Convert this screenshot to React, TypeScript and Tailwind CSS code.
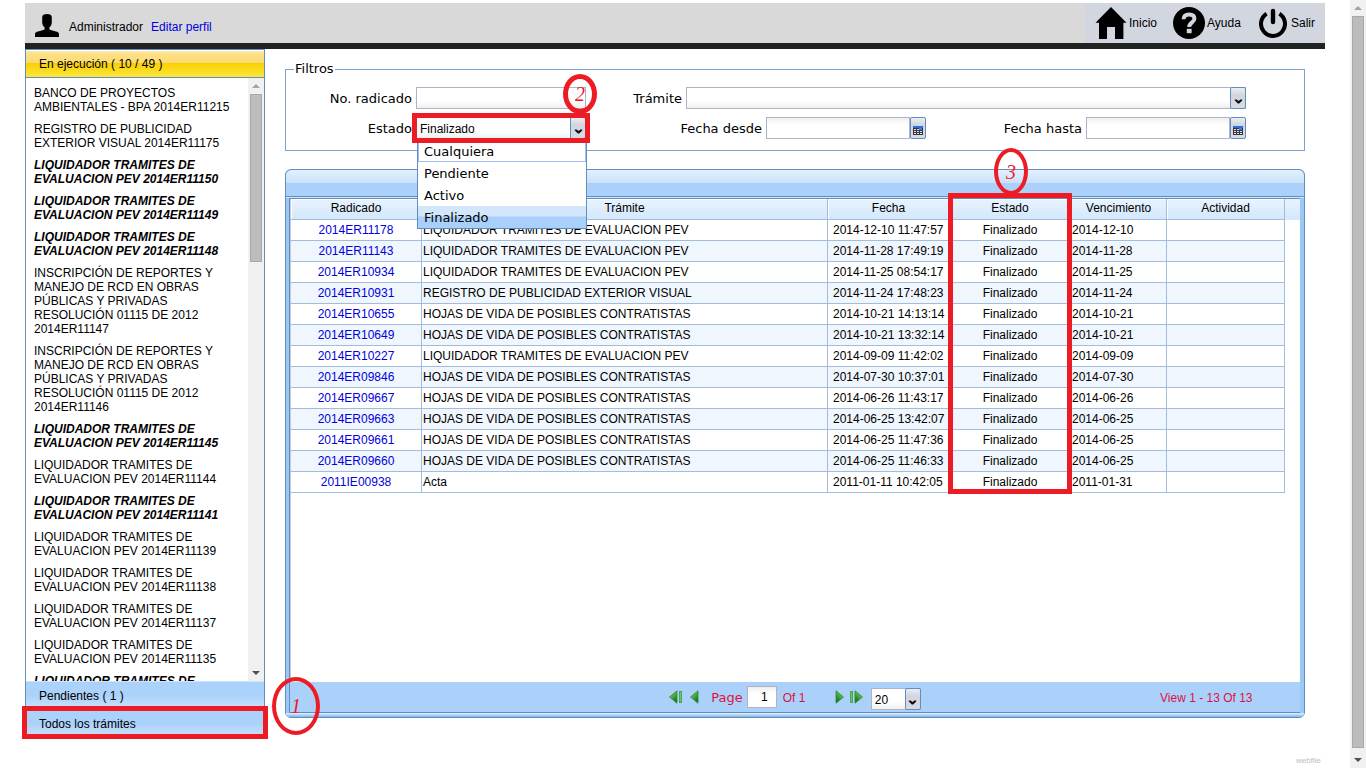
import React, { useState } from "react";

type Task = { lines: string[]; bold?: boolean };

const liq = (code: string, bold = false): Task => ({
  lines: ["LIQUIDADOR TRAMITES DE", `EVALUACION PEV ${code}`],
  bold,
});

const rcd = (code: string): Task => ({
  lines: [
    "INSCRIPCIÓN DE REPORTES Y",
    "MANEJO DE RCD EN OBRAS",
    "PÚBLICAS Y PRIVADAS",
    "RESOLUCIÓN 01115 DE 2012",
    code,
  ],
});

const tasks: Task[] = [
  { lines: ["BANCO DE PROYECTOS", "AMBIENTALES - BPA 2014ER11215"] },
  { lines: ["REGISTRO DE PUBLICIDAD", "EXTERIOR VISUAL 2014ER11175"] },
  liq("2014ER11150", true),
  liq("2014ER11149", true),
  liq("2014ER11148", true),
  rcd("2014ER11147"),
  rcd("2014ER11146"),
  liq("2014ER11145", true),
  liq("2014ER11144"),
  liq("2014ER11141", true),
  liq("2014ER11139"),
  liq("2014ER11138"),
  liq("2014ER11137"),
  liq("2014ER11135"),
  { lines: ["LIQUIDADOR TRAMITES DE"], bold: true },
];

const LIQ = "LIQUIDADOR TRAMITES DE EVALUACION PEV";
const HOJAS = "HOJAS DE VIDA DE POSIBLES CONTRATISTAS";

const rows: string[][] = [
  ["2014ER11178", LIQ, "2014-12-10 11:47:57", "2014-12-10"],
  ["2014ER11143", LIQ, "2014-11-28 17:49:19", "2014-11-28"],
  ["2014ER10934", LIQ, "2014-11-25 08:54:17", "2014-11-25"],
  ["2014ER10931", "REGISTRO DE PUBLICIDAD EXTERIOR VISUAL", "2014-11-24 17:48:23", "2014-11-24"],
  ["2014ER10655", HOJAS, "2014-10-21 14:13:14", "2014-10-21"],
  ["2014ER10649", HOJAS, "2014-10-21 13:32:14", "2014-10-21"],
  ["2014ER10227", LIQ, "2014-09-09 11:42:02", "2014-09-09"],
  ["2014ER09846", HOJAS, "2014-07-30 10:37:01", "2014-07-30"],
  ["2014ER09667", HOJAS, "2014-06-26 11:43:17", "2014-06-26"],
  ["2014ER09663", HOJAS, "2014-06-25 13:42:07", "2014-06-25"],
  ["2014ER09661", HOJAS, "2014-06-25 11:47:36", "2014-06-25"],
  ["2014ER09660", HOJAS, "2014-06-25 11:46:33", "2014-06-25"],
  ["2011IE00938", "Acta", "2011-01-11 10:42:05", "2011-01-31"],
];

const inputCls =
  "block h-[22px] w-full min-w-0 flex-1 appearance-none border border-[#b0b2c6] bg-linear-to-b from-[#eef0f0] via-white via-35% to-white px-1 text-xs outline-none";
const comboCls =
  "block w-full min-w-0 flex-1 appearance-none border border-[#b0b2c6] bg-linear-to-b from-white via-white via-65% to-[#eef0f0] outline-none";
const sideBtnCls =
  "h-7 w-full border-t border-[#cfe4fb] bg-linear-to-b from-[#abd2fb] via-[#abd2fb] via-50% to-[#cae1fc] pl-[13px] text-left text-black";
const thCls =
  "h-[21px] border-r border-b border-[#a3bcdb] bg-linear-to-b from-[#e9f3fe] to-[#d3e7fc] p-0 pb-0.5 text-center font-normal shadow-[inset_1px_1px_0_#fff]";
const tdCls = "h-[21px] overflow-hidden border-r border-b border-[#a3bcdb] p-0 whitespace-nowrap";

function Chevron() {
  return (
    <svg width="9" height="5" viewBox="0 0 9 5" aria-hidden="true">
      <path d="M0.8 0.4H2.6L4.5 2 6.4 0.4H8.2V1.6L5.2 4.4H3.8L0.8 1.6Z" fill="#111" />
    </svg>
  );
}

function Calendar() {
  return (
    <svg width="10" height="9" viewBox="0 0 10 9" shapeRendering="crispEdges" aria-hidden="true">
      <rect width="10" height="9" fill="#33343c" />
      <rect width="10" height="2" fill="#2d6fd0" />
      <path d="M1 3h2v1H1zM4 3h2v1H4zM1 5h2v1H1zM4 5h2v1H4zM7 5h2v1H7zM1 7h2v1H1zM4 7h2v1H4zM7 7h2v1H7z" fill="#e6e8ee" />
      <rect x="6" y="2" width="3" height="2" fill="#2a86f2" />
    </svg>
  );
}

const triggerCls =
  "flex h-[22px] w-4 shrink-0 justify-center rounded-xs border border-[#5f8fc0] bg-linear-to-b from-[#eceef3] via-[#d2d5de] via-35% to-[#d8dbe3]";

function DateField({ id, label }: { id: string; label: string }) {
  return (
    <div className="flex min-w-0 flex-1">
      <input id={id} className={inputCls} />
      <button type="button" aria-label={`Calendario ${label}`} className={`${triggerCls} items-end pb-[3px]`}>
        <Calendar />
      </button>
    </div>
  );
}

function ComboTrigger() {
  return (
    <span className={`pointer-events-none absolute right-0 items-end pb-1 ${triggerCls}`}>
      <Chevron />
    </span>
  );
}

function ScrollArrow({ down = false }: { down?: boolean }) {
  return (
    <svg width="8" height="4" viewBox="0 0 8 4" aria-hidden="true">
      {down ? <path d="M0 0H8L4 4Z" fill="#505050" /> : <path d="M0 4H8L4 0Z" fill="#a3a3a3" />}
    </svg>
  );
}

function Ring({ className, children }: { className: string; children: React.ReactNode }) {
  return (
    <div
      className={`pointer-events-none absolute z-30 flex items-center justify-center rounded-[50%] border-[#ed1c24] font-['Liberation_Serif',serif] text-xl text-[#ed1c24] italic ${className}`}
    >
      {children}
    </div>
  );
}

function PagerArrow({ bar = false, right = false, label }: { bar?: boolean; right?: boolean; label: string }) {
  const width = bar ? 13 : 9;
  return (
    <button type="button" aria-label={label} className={right ? "shrink-0 -scale-x-100" : "shrink-0"}>
      <svg width={width} height="14" viewBox={`0 0 ${width} 14`} aria-hidden="true">
        <defs>
          <linearGradient id="leaf" x1="0" y1="0" x2="0.6" y2="1">
            <stop offset="0" stopColor="#9ade8a" />
            <stop offset="0.5" stopColor="#4db043" />
            <stop offset="1" stopColor="#14701a" />
          </linearGradient>
        </defs>
        <path d="M8 0.8V13.2L0.5 7Z" fill="url(#leaf)" stroke="#2f8a35" strokeWidth="0.8" />
        {bar && <rect x="10.4" y="1.4" width="2" height="11.2" fill="#6cc65a" stroke="#3d9c40" strokeWidth="0.8" />}
      </svg>
    </button>
  );
}

function Header() {
  return (
    <header className="mt-[3px] flex h-[46px] shrink-0 items-stretch border-b-6 border-[#212322] bg-[#d9d9d9]">
      <div className="flex flex-1 items-center pl-2.5">
        <svg width="24" height="23" viewBox="0 0 24 23" className="mt-1" aria-hidden="true">
          <path
            d="M12 0C15 0 16.8 1 16.8 3.2V8.6C16.8 10.8 15.6 12.4 14.4 13.6V15.4C16.8 16.4 19.4 16.9 22 17.8C23.4 18.3 24 19 24 20.4V23H0V20.4C0 19 .6 18.3 2 17.8C4.6 16.9 7.2 16.4 9.6 15.4V13.6C8.4 12.4 7.2 10.8 7.2 8.6V3.2C7.2 1 9 0 12 0Z"
            fill="#000"
          />
        </svg>
        <span className="mt-2 ml-2.5">Administrador</span>
        <a href="#perfil" className="mt-2 ml-2 text-[#0000e0]">
          Editar perfil
        </a>
      </div>
      <nav className="flex w-60 items-center bg-[#d2d6df] pl-2.5">
        <a href="#inicio" className="flex w-[78px] items-center">
          <svg width="32" height="32" viewBox="0 0 32 32" aria-hidden="true">
            <path d="M16 0 31.5 15.8H28.4V32H20V20H12V32H4V15.8H0.5Z" fill="#000" />
          </svg>
          <span className="mb-px ml-0.5">Inicio</span>
        </a>
        <a href="#ayuda" className="flex w-[86px] items-center">
          <svg width="32" height="32" viewBox="0 0 32 32" aria-hidden="true">
            <circle cx="16" cy="16" r="16" fill="#000" />
            <path
              d="M10.6 12.3C10.7 8.9 12.8 7.6 16 7.6 19.4 7.6 21.4 9 21.4 11.7 21.4 15.6 16.2 15.2 16.2 20"
              fill="none"
              stroke="#d2d6df"
              strokeWidth="4"
            />
            <rect x="13.8" y="21.8" width="4.8" height="4.4" fill="#d2d6df" />
          </svg>
          <span className="mb-px ml-0.5">Ayuda</span>
        </a>
        <a href="#salir" className="flex items-center">
          <svg width="28" height="32" viewBox="0 0 28 32" aria-hidden="true">
            <path d="M7.6 6.8A12 12 0 1 0 20.4 6.8" fill="none" stroke="#000" strokeWidth="4" />
            <path d="M14 4V15" stroke="#000" strokeWidth="4.4" strokeLinecap="round" />
          </svg>
          <span className="mb-px ml-1">Salir</span>
        </a>
      </nav>
    </header>
  );
}

function Sidebar() {
  return (
    <aside className="flex w-60 shrink-0 flex-col border border-[#5f8fc0]">
      <button
        type="button"
        className="h-7 shrink-0 border-b border-[#5f8fc0] bg-[linear-gradient(#ffefc8_0,#fde08a_12%,#fbdb70_48%,#fbd000_50%,#fbe640_100%)] pl-[13px] text-left shadow-[inset_0_1px_0_#fff]"
      >
        En ejecución ( 10 / 49 )
      </button>
      <div className="flex min-h-0 flex-1">
        <ul className="flex min-w-0 flex-1 flex-col gap-2 overflow-hidden pt-2 pl-2 leading-[14px]">
          {tasks.map((t, i) => (
            <li key={i} className={`shrink-0 whitespace-nowrap ${t.bold ? "font-bold italic" : ""}`}>
              {t.lines.map((l) => (
                <div key={l}>{l}</div>
              ))}
            </li>
          ))}
        </ul>
        <div className="flex w-4 flex-col items-center bg-[#f1f1f1]">
          <div className="flex h-4 items-center">
            <ScrollArrow />
          </div>
          <div className="h-[168px] w-3 border border-[#a8a8a8] bg-[#bcbcbc]" />
          <div className="mt-auto flex h-4 items-center">
            <ScrollArrow down />
          </div>
        </div>
      </div>
      <button type="button" className={sideBtnCls}>
        Pendientes ( 1 )
      </button>
      <div className="relative">
        <button type="button" className={`block ${sideBtnCls}`}>
          Todos los trámites
        </button>
        <div className="pointer-events-none absolute -inset-x-1 -top-[3px] -bottom-[2px] z-20 border-5 border-[#ed1c24]" />
        <Ring className="-top-8 left-[246px] h-[58px] w-12 border-4">1</Ring>
      </div>
    </aside>
  );
}

function Filters() {
  const [estado, setEstado] = useState("Finalizado");
  const states = ["Cualquiera", "Pendiente", "Activo", "Finalizado"];
  return (
    <fieldset className="shrink-0 border border-[#7ba2cd] pb-[11px] font-['DejaVu_Sans',Verdana,sans-serif] text-[13px]">
      <legend className="ml-2 px-px leading-4">Filtros</legend>
      <div className="mt-2.5 flex items-center pr-[58px] leading-6">
        <label htmlFor="radicado" className="h-[22px] w-[130px] pr-1 text-right">
          No. radicado
        </label>
        <div className="relative flex w-[170px]">
          <input id="radicado" className={comboCls + " h-[22px] px-1"} />
          <Ring className="-top-[13px] left-[147px] h-10 w-[34px] border-5">2</Ring>
        </div>
        <label htmlFor="tramite" className="h-[22px] w-[100px] pr-1 text-right">
          Trámite
        </label>
        <div className="relative flex flex-1">
          <select id="tramite" className={comboCls + " h-[22px] px-1 text-xs"}>
            <option></option>
          </select>
          <ComboTrigger />
        </div>
      </div>
      <div className="mt-2 flex items-center pr-[58px] leading-6">
        <label htmlFor="estado" className="h-[22px] w-[130px] pr-1 text-right">
          Estado
        </label>
        <div className="relative flex w-[170px]">
          <select
            id="estado"
            value={estado}
            onChange={(e) => setEstado(e.target.value)}
            className={comboCls + " h-[22px] px-[3px] pt-0.5 font-['Liberation_Sans',Arial,sans-serif] text-xs"}
          >
            {states.map((s) => (
              <option key={s}>{s}</option>
            ))}
          </select>
          <ComboTrigger />
          <div className="pointer-events-none absolute -inset-1 z-20 border-5 border-[#ed1c24]" />
          <ul className="absolute top-[22px] left-px z-10 w-[170px] border border-[#5f8fc0] bg-white">
            {states.map((s) => (
              <li
                key={s}
                onClick={() => setEstado(s)}
                className={
                  "h-[22px] px-[5px] " +
                  (s === "Cualquiera"
                    ? "border border-[#a3bdf0] leading-[22px]"
                    : s === estado
                      ? "border-x border-transparent bg-linear-to-b from-[#d2e6fc] from-45% to-[#a9d0fa] to-50%"
                      : "border-x border-transparent")
                }
              >
                {s}
              </li>
            ))}
          </ul>
        </div>
        <label htmlFor="desde" className="h-[22px] w-[180px] pr-1 text-right">
          Fecha desde
        </label>
        <DateField id="desde" label="desde" />
        <label htmlFor="hasta" className="h-[22px] w-[160px] pr-1 text-right">
          Fecha hasta
        </label>
        <DateField id="hasta" label="hasta" />
      </div>
    </fieldset>
  );
}

function Grid() {
  return (
    <section className="mt-[18px] flex min-h-0 flex-1 flex-col rounded-md border border-[#5f8fc0] bg-[#9cc8f6]">
      <div className="h-[27px] shrink-0 rounded-t-md border-b border-[#5f8fc0] bg-[linear-gradient(#e4f0fe_0,#c9e1fb_50%,#abd1fb_50%,#abd1fb_100%)]" />
      <div className="h-px shrink-0 bg-[#d6e8fb]" />
      <div className="mr-1 ml-[3px] flex min-h-0 flex-1 flex-col border border-r-0 border-[#5f8fc0] bg-white">
        <div className="flex min-h-0 flex-1 items-start border-l border-[#c9c9c9]">
          <table className="min-w-0 flex-1 table-fixed border-separate border-spacing-0">
            <colgroup>
              <col className="w-[131px]" />
              <col />
              <col className="w-[122px]" />
              <col className="w-[121px]" />
              <col className="w-24" />
              <col className="w-[118px]" />
            </colgroup>
            <thead>
              <tr>
                {["Radicado", "Trámite", "Fecha", "Estado", "Vencimiento", "Actividad"].map((h) => (
                  <th key={h} scope="col" className={`${thCls} ${h === "Estado" ? "relative" : ""}`}>
                    {h}
                    {h === "Estado" && (
                      <>
                        <div className="pointer-events-none absolute -top-[6px] -right-[2px] -left-[2px] z-20 h-[301px] border-5 border-[#ed1c24]" />
                        <Ring className="-top-[51px] left-[44px] h-[47px] w-[34px] border-4">3</Ring>
                      </>
                    )}
                  </th>
                ))}
              </tr>
            </thead>
            <tbody>
              {rows.map(([id, tramite, fecha, venc]) => (
                <tr key={id} className="odd:bg-white even:bg-[#eff6fe]">
                  <td className={`${tdCls} text-center text-[#0000e0]`}>
                    <a href={`#${id}`}>{id}</a>
                  </td>
                  <td className={`${tdCls} pl-px`}>{tramite}</td>
                  <td className={`${tdCls} pl-[5px]`}>{fecha}</td>
                  <td className={`${tdCls} text-center`}>Finalizado</td>
                  <td className={`${tdCls} pl-px`}>{venc}</td>
                  <td className={tdCls}></td>
                </tr>
              ))}
            </tbody>
          </table>
          <div className="h-[21px] w-[15px] bg-linear-to-b from-[#e9f3fe] to-[#d3e7fc]" />
        </div>
        <div className="flex h-[30px] shrink-0 items-center bg-[#abd1fb] text-[#dc143c]">
          <div className="flex flex-1 items-center justify-center pl-[140px]">
            <PagerArrow bar label="Primera página" />
            <span className="w-2" />
            <PagerArrow label="Página anterior" />
            <label htmlFor="page" className="ml-3 pt-0.5 font-['DejaVu_Sans',Verdana,sans-serif] text-[13px]">
              Page
            </label>
            <input
              id="page"
              defaultValue="1"
              className="mx-1 h-[22px] w-[30px] border border-[#b0b2c6] bg-linear-to-b from-[#eef0f0] via-white via-35% to-white pr-2 text-right text-xs text-black outline-none"
            />
            <span className="w-[54px] pt-0.5 pl-0.5">Of 1</span>
            <PagerArrow right label="Página siguiente" />
            <span className="w-1.5" />
            <PagerArrow bar right label="Última página" />
            <div className="relative mt-1 ml-2 flex w-[50px] text-black">
              <select aria-label="Filas por página" className={comboCls + " h-[22px] px-[3px] pt-0.5 text-xs"}>
                <option>20</option>
              </select>
              <ComboTrigger />
            </div>
          </div>
          <span className="w-[140px] pt-0.5 text-left">View 1 - 13 Of 13</span>
        </div>
      </div>
      <div className="h-1 shrink-0 rounded-b-md bg-linear-to-b from-[#e4f0fe] to-[#84b4e6]" />
    </section>
  );
}

export default function App() {
  return (
    <div className="flex h-screen bg-white font-['Liberation_Sans',Arial,sans-serif] text-xs text-black">
      <div className="flex min-w-0 flex-1 flex-col px-[25px]">
        <Header />
        <div className="flex min-h-0 flex-1">
          <Sidebar />
          <main className="flex min-w-0 flex-1 flex-col px-5 pt-3 pb-5">
            <Filters />
            <Grid />
          </main>
        </div>
        <footer className="h-[30px] shrink-0 pt-[18px] pr-1 text-right text-[8px] leading-[10px] text-[#bdbdbd]">webfile</footer>
      </div>
      <div className="flex w-4 flex-col items-center bg-[#f1f1f1]">
        <div className="flex h-4 shrink-0 items-center">
          <ScrollArrow />
        </div>
        <div className="mb-1 w-3 flex-1 border border-[#a8a8a8] bg-[#bcbcbc]" />
        <div className="flex h-4 shrink-0 items-center">
          <ScrollArrow down />
        </div>
      </div>
    </div>
  );
}
